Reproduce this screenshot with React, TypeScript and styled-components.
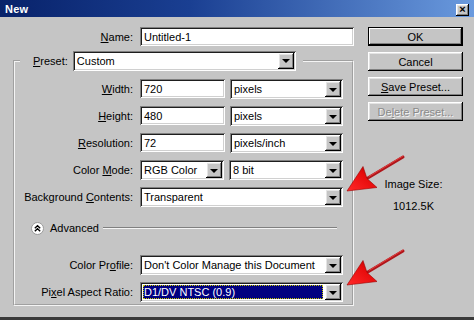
import React from "react";
import styled, {createGlobalStyle, css} from "styled-components";

const GlobalStyle = createGlobalStyle`
    html, body {
        margin: 0;
        padding: 0;
        background: #3c3c3c;
    }
    body {
        font-family: "Liberation Sans", Arial, sans-serif;
        font-size: 11px;
        color: #000;
    }
`;

const raised = css`
    box-shadow: inset -1px -1px #000, inset 1px 1px #fff, inset -2px -2px #808080, inset 2px 2px #e4e4e4;
`,

    sunken = css`
    box-shadow: inset 1px 1px #808080, inset -1px -1px #fff, inset 2px 2px #1e1e1e, inset -2px -2px #d0d0d0;
`,

    Window = styled.div`
        position: relative;
        width: 474px;
        height: 317px;
        background: #c5c5c5;
        border-bottom: 3px solid #3a3a3a;
        display: flex;
        flex-direction: column;
        overflow: hidden;
`,

    TitleBar = styled.div`
        height: 17px;
        display: flex;
        align-items: center;
        justify-content: space-between;
        padding: 0 5px 0 5px;
        background: linear-gradient(90deg, #08226a 0%, #1a3f92 40%, #6a9ade 100%);
`,

    Title = styled.span`
        color: #fff;
        font-weight: bold;
        font-size: 11px;
        letter-spacing: 0.2px;
`,

    CloseButton = styled.div`
        width: 13px;
        height: 12px;
        margin-top: 2px;
        background: #c5c5c5;
        ${raised}
        display: flex;
        align-items: center;
        justify-content: center;
        font-weight: bold;
        font-size: 11px;
        line-height: 1;
`,

    Body = styled.div`
        display: flex;
        padding-top: 10px;
`,

    MainColumn = styled.div`
        width: 354px;
        padding-left: 13px;
        box-sizing: border-box;
`,

    NameRow = styled.div`
        display: grid;
        grid-template-columns: 120px 214px;
        column-gap: 7px;
        align-items: center;
        height: 19px;
`,

    Label = styled.label`
        text-align: right;
        white-space: nowrap;
`,

    Key = styled.span`
        text-decoration: underline;
`,

    TextBox = styled.div<{ $w?: number }>`
        width: ${(p) => (p.$w ? `${p.$w}px` : "auto")};
        height: 19px;
        background: #fff;
        ${sunken}
        display: flex;
        align-items: center;
        padding-left: 4px;
        box-sizing: border-box;
        white-space: nowrap;
        overflow: hidden;
`,

    SelectBox = styled.div<{ $w?: number }>`
        width: ${(p) => (p.$w ? `${p.$w}px` : "auto")};
        height: 20px;
        background: #fff;
        ${sunken}
        display: flex;
        align-items: center;
        padding: 2px 2px 2px 4px;
        box-sizing: border-box;
        white-space: nowrap;
`,

    SelectText = styled.span<{ $selected?: boolean }>`
        flex: 1;
        height: 14px;
        line-height: 14px;
        margin-right: 2px;
        margin-left: -1px;
        padding-left: 1px;
        overflow: hidden;
        ${(p) => p.$selected && css`
            background: #000080;
            color: #fff;
            outline: 1px dotted #c8c800;
            outline-offset: -1px;
        `}
`,

    DropButton = styled.div`
        width: 16px;
        height: 16px;
        background: #c5c5c5;
        ${raised}
        display: flex;
        align-items: center;
        justify-content: center;
        flex-shrink: 0;
        &::after {
            content: "";
            border-left: 4px solid transparent;
            border-right: 4px solid transparent;
            border-top: 4px solid #000;
            margin-top: 1px;
        }
`,

    Group = styled.fieldset`
        margin: 5px 0 0 0;
        padding: 9px 0 0 0;
        width: 341px;
        height: 255px;
        box-sizing: border-box;
        border: 2px groove #f4f4f4;
        min-inline-size: 0;
`,

    Legend = styled.legend`
        margin-left: 5px;
        padding: 0 7px 0 13px;
        display: flex;
        align-items: center;
        gap: 5px;
        height: 19px;
`,

    Rows = styled.div`
        display: grid;
        grid-template-columns: 118px 203px;
        grid-auto-rows: 20px;
        column-gap: 7px;
        row-gap: 7px;
        align-items: center;
`,

    Pair = styled.div`
        display: flex;
        gap: 5px;
`,

    AdvancedRow = styled.div`
        display: flex;
        align-items: center;
        gap: 6px;
        height: 14px;
        margin: 14px 15px 20px 16px;
`,

    Rule = styled.div`
        flex: 1;
        height: 0;
        border-top: 1px solid #808080;
        border-bottom: 1px solid #f4f4f4;
        margin-left: -2px;
`,

    SideColumn = styled.div`
        width: 95px;
        margin-left: 14px;
        display: flex;
        flex-direction: column;
        gap: 6px;
`,

    Button = styled.div<{ $default?: boolean, $disabled?: boolean }>`
        height: 19px;
        background: #c5c5c5;
        ${raised}
        display: flex;
        align-items: center;
        justify-content: center;
        box-sizing: border-box;
        ${(p) => p.$default && css`
            outline: 1px solid #000;
            outline-offset: -1px;
            box-shadow: inset -2px -2px #000, inset 2px 2px #fff, inset -3px -3px #808080, inset 1px 1px #000;
        `}
        ${(p) => p.$disabled && css`
            color: #8a8a8a;
            text-shadow: 1px 1px #f4f4f4;
        `}
`,

    ImageSize = styled.div`
        margin-top: 46px;
        padding-right: 4px;
        text-align: center;
        line-height: 22px;
`,

    ArrowSvg = styled.svg<{ $x: number, $y: number }>`
        position: absolute;
        left: ${(p) => p.$x}px;
        top: ${(p) => p.$y}px;
        pointer-events: none;
`;

interface ISelectProps {
    value: string,
    width?: number,
    selected?: boolean
}

const Select = ({value, width, selected}: ISelectProps) => (
    <SelectBox $w={width}>
        <SelectText $selected={selected}>
            {value}
        </SelectText>
        <DropButton />
    </SelectBox>
);

const AdvancedIcon = () => (
    <svg width="13" height="13" viewBox="0 0 13 13">
        <circle cx="6.5" cy="6.5" r="6" fill="#fff" stroke="#9a9a9a" />
        <path d="M3.8 6.2 L6.5 3.8 L9.2 6.2 M3.8 9.2 L6.5 6.8 L9.2 9.2" fill="none" stroke="#000" strokeWidth="1.4" />
    </svg>
);

const Arrow = ({x, y, id}: { x: number, y: number, id: string }) => (
    <ArrowSvg $x={x} $y={y} width="62" height="42" viewBox="0 0 62 42">
        <defs>
            <linearGradient id={`head-${id}`} x1="0" y1="1" x2="1" y2="0">
                <stop offset="0" stopColor="#ff2a2a" />
                <stop offset="0.6" stopColor="#e80c0c" />
                <stop offset="1" stopColor="#a80000" />
            </linearGradient>
        </defs>
        <line x1="58" y1="5" x2="22" y2="26.5" stroke="#b0151a" strokeWidth="3" strokeLinecap="round" />
        <line x1="58" y1="4" x2="24" y2="24.5" stroke="#e04040" strokeWidth="1" strokeLinecap="round" />
        <path d="M2 39 L18 14.5 L22 26.5 L32 35.5 Z" fill={`url(#head-${id})`} stroke="#9a0000" strokeWidth="0.6" />
    </ArrowSvg>
);

const App = () => (
    <>
        <GlobalStyle />
        <Window>
            <TitleBar>
                <Title>New</Title>
                <CloseButton>×</CloseButton>
            </TitleBar>
            <Body>
                <MainColumn>
                    <NameRow>
                        <Label><Key>N</Key>ame:</Label>
                        <TextBox>Untitled-1</TextBox>
                    </NameRow>
                    <Group>
                        <Legend>
                            <Label><Key>P</Key>reset:</Label>
                            <Select value="Custom" width={223} />
                        </Legend>
                        <Rows>
                            <Label><Key>W</Key>idth:</Label>
                            <Pair>
                                <TextBox $w={85}>720</TextBox>
                                <Select value="pixels" width={113} />
                            </Pair>
                            <Label><Key>H</Key>eight:</Label>
                            <Pair>
                                <TextBox $w={85}>480</TextBox>
                                <Select value="pixels" width={113} />
                            </Pair>
                            <Label><Key>R</Key>esolution:</Label>
                            <Pair>
                                <TextBox $w={85}>72</TextBox>
                                <Select value="pixels/inch" width={113} />
                            </Pair>
                            <Label>Color <Key>M</Key>ode:</Label>
                            <Pair>
                                <Select value="RGB Color" width={84} />
                                <Select value="8 bit" width={114} />
                            </Pair>
                            <Label>Background <Key>C</Key>ontents:</Label>
                            <Select value="Transparent" />
                        </Rows>
                        <AdvancedRow>
                            <AdvancedIcon />
                            <span>Advanced</span>
                            <Rule />
                        </AdvancedRow>
                        <Rows>
                            <Label>Color Pr<Key>o</Key>file:</Label>
                            <Select value="Don't Color Manage this Document" />
                            <Label>Pi<Key>x</Key>el Aspect Ratio:</Label>
                            <Select value="D1/DV NTSC (0.9)" selected />
                        </Rows>
                    </Group>
                </MainColumn>
                <SideColumn>
                    <Button $default>OK</Button>
                    <Button>Cancel</Button>
                    <Button><span><Key>S</Key>ave Preset...</span></Button>
                    <Button $disabled><span>De<Key>l</Key>ete Preset...</span></Button>
                    <ImageSize>
                        Image Size:
                        <br />
                        1012.5K
                    </ImageSize>
                </SideColumn>
            </Body>
            <Arrow x={345} y={152} id="a" />
            <Arrow x={345} y={246} id="b" />
        </Window>
    </>
);

export default App;
